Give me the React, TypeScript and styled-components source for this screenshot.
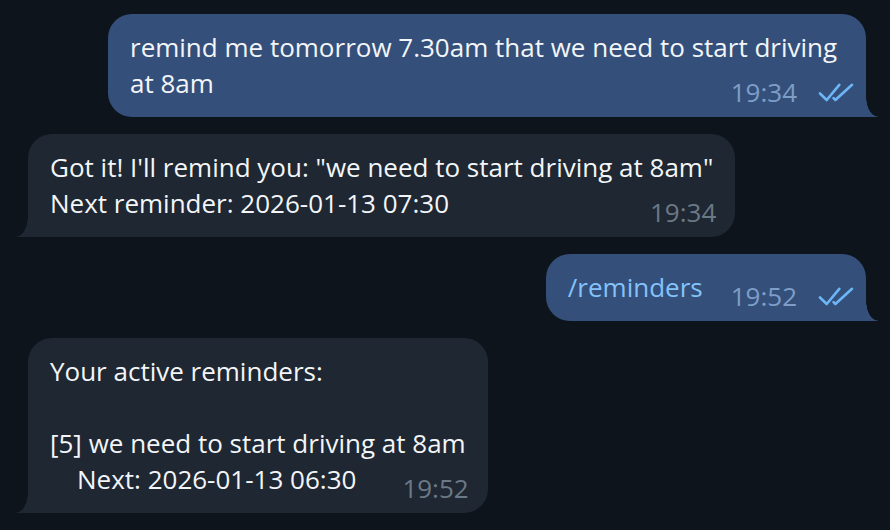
import React from 'react';
import styled, { createGlobalStyle, css } from 'styled-components';

const GlobalStyle = createGlobalStyle`
  html, body {
    margin: 0;
    padding: 0;
    background: #0e141c;
  }
  body {
    font-family: "Open Sans", "Noto Sans", sans-serif;
    -webkit-font-smoothing: antialiased;
  }
`;

const OUT_BG = '#34507a';
const IN_BG = '#1e2732';

type Side = { $out?: boolean };

const Chat = styled.div`
  display: flex;
  flex-direction: column;
  gap: 17px;
  width: 890px;
  height: 530px;
  padding: 14px 24px 0 28px;
  box-sizing: border-box;
  overflow: hidden;
`;

const Bubble = styled.div<Side>`
  position: relative;
  display: flow-root;
  align-self: ${p => (p.$out ? 'flex-end' : 'flex-start')};
  max-width: 758px;
  box-sizing: border-box;
  padding: 15px 22px 16px;
  border-radius: 24px;
  ${p => (p.$out ? 'border-bottom-right-radius: 0;' : 'border-bottom-left-radius: 0;')}
  background: ${p => (p.$out ? OUT_BG : IN_BG)};
  color: #f3f5f8;
  font-size: 26px;
  line-height: 36px;
  white-space: pre-wrap;

  /* the little tail at the bottom corner */
  &::after {
    content: '';
    position: absolute;
    bottom: 0;
    width: 12px;
    height: 20px;
    ${p =>
      p.$out
        ? css`
            right: -12px;
            background: radial-gradient(12px 20px at 100% 0, transparent 96%, ${OUT_BG} 100%);
          `
        : css`
            left: -12px;
            background: radial-gradient(12px 20px at 0 0, transparent 96%, ${IN_BG} 100%);
          `}
  }
`;

const Command = styled.span`
  color: #84c3fa;
`;

const Meta = styled.span<Side>`
  float: right;
  display: inline-flex;
  align-items: center;
  gap: 21px;
  height: 36px;
  margin: 9px ${p => (p.$out ? '-10px' : '-3px')} -9px 28px;
  line-height: 36px;
  color: ${p => (p.$out ? '#7e9dc7' : '#6b7886')};
  white-space: nowrap;
`;

const Checks = () => (
  <svg width="36" height="19" viewBox="0 0 36 19" fill="none">
    <path
      d="M2 10.5 L8.7 17 L21.3 1.8 M15.6 15.2 L17.4 17 L34 1.8"
      stroke="#6cb5f6"
      strokeWidth="2.6"
      strokeLinecap="round"
      strokeLinejoin="round"
    />
  </svg>
);

const messages = [
  {
    out: true,
    text: 'remind me tomorrow 7.30am that we need to start driving at 8am',
    time: '19:34'
  },
  {
    out: false,
    text: 'Got it! I\'ll remind you: "we need to start driving at 8am"\nNext reminder: 2026-01-13 07:30',
    time: '19:34'
  },
  {
    out: true,
    command: '/reminders',
    time: '19:52'
  },
  {
    out: false,
    text: 'Your active reminders:\n\n[5] we need to start driving at 8am\n    Next: 2026-01-13 06:30',
    time: '19:52'
  }
];

export default function App() {
  return (
    <>
      <GlobalStyle />
      <Chat>
        {messages.map((m, i) => (
          <Bubble $out={m.out} key={`msg-${i}`}>
            {m.command ? <Command>{m.command}</Command> : m.text}
            <Meta $out={m.out}>
              {m.time}
              {m.out && <Checks />}
            </Meta>
          </Bubble>
        ))}
      </Chat>
    </>
  );
}
